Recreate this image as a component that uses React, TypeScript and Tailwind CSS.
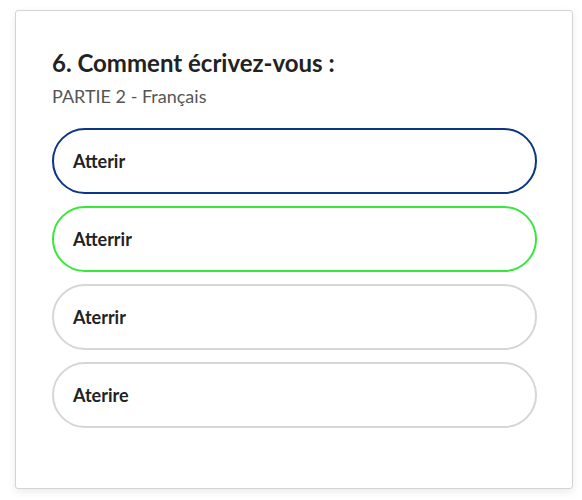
const options = [
  { label: 'Atterir', border: 'border-[#0b3585]' },
  { label: 'Atterrir', border: 'border-[#35e83a]' },
  { label: 'Aterrir', border: 'border-[#d6d6d6]' },
  { label: 'Aterire', border: 'border-[#d6d6d6]' },
];

export default function App() {
  return (
    <div className="min-h-[500px] w-[582px] bg-white pl-[15px] pt-[10px] font-['Lato',sans-serif]">
      <div className="h-[479px] w-[558px] rounded-[3px] border border-[#d4d4d4] bg-white px-[36px] pt-[37px] shadow-[0_3px_8px_rgba(0,0,0,0.08)]">
        <h2 className="text-[24px] leading-[30px] font-bold text-[#222]">6. Comment écrivez-vous :</h2>
        <p className="mt-[6px] text-[18px] leading-[24px] text-[#555]">PARTIE 2 - Français</p>
        <div className="mt-[20px] flex flex-col gap-[12px]">
          {options.map((o) => (
            <button
              key={o.label}
              className={`flex h-[66px] w-[485px] items-center rounded-full border-2 bg-white px-[19px] text-left text-[18px] font-bold text-[#222] ${o.border}`}
            >
              {o.label}
            </button>
          ))}
        </div>
      </div>
    </div>
  );
}
